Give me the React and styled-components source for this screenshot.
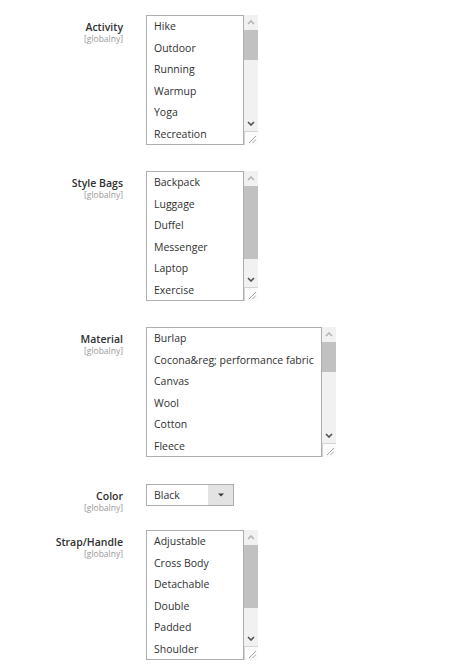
import React from "react";
import styled, { createGlobalStyle } from "styled-components";

const GlobalStyle = createGlobalStyle`
    body {
        margin: 0;
        background: #fff;
        font-family: "Open Sans", "Liberation Sans", sans-serif;
        color: #303030;
    }
`;

const fields = [
    {
        label: "Activity",
        type: "multi",
        width: 98,
        thumb: 30,
        options: ["Hike", "Outdoor", "Running", "Warmup", "Yoga", "Recreation"],
    },
    {
        label: "Style Bags",
        type: "multi",
        width: 98,
        thumb: 73,
        options: ["Backpack", "Luggage", "Duffel", "Messenger", "Laptop", "Exercise"],
    },
    {
        label: "Material",
        type: "multi",
        width: 176,
        thumb: 30,
        options: [
            "Burlap",
            "Cocona&reg; performance fabric",
            "Canvas",
            "Wool",
            "Cotton",
            "Fleece",
        ],
    },
    { label: "Color", type: "select", value: "Black", mt: 1 },
    {
        label: "Strap/Handle",
        type: "multi",
        width: 98,
        thumb: 63,
        mt: -9,
        options: ["Adjustable", "Cross Body", "Detachable", "Double", "Padded", "Shoulder"],
    },
];

const Chevron = ({ up, color }) => (
    <svg width="8" height="5" viewBox="0 0 8 5">
        <polyline
            points={up ? "1,4 4,1 7,4" : "1,1 4,4 7,1"}
            fill="none"
            stroke={color}
            strokeWidth="1.6"
        />
    </svg>
);

const MultiSelect = ({ field }) => (
    <ListWrap>
        <OptionsPanel $width={field.width}>
            {field.options.map((opt) => (
                <Option key={opt}>{opt}</Option>
            ))}
        </OptionsPanel>
        <ScrollBar>
            <ScrollButton>
                <Chevron up color="#b4b4b4" />
            </ScrollButton>
            <Track>
                <Thumb $height={field.thumb} />
            </Track>
            <ScrollButton>
                <Chevron color="#505050" />
            </ScrollButton>
            <Resizer>
                <svg width="8" height="8" viewBox="0 0 8 8">
                    <line x1="1" y1="8" x2="8" y2="1" stroke="#8a8a8a" strokeWidth="0.8" />
                    <line x1="4.5" y1="8" x2="8" y2="4.5" stroke="#8a8a8a" strokeWidth="0.8" />
                </svg>
            </Resizer>
        </ScrollBar>
    </ListWrap>
);

const Dropdown = ({ value }) => (
    <SelectBox>
        <SelectValue>{value}</SelectValue>
        <SelectArrow>
            <svg width="6" height="4" viewBox="0 0 6 4">
                <polygon points="0,0.5 6,0.5 3,3.5" fill="#41362f" />
            </svg>
        </SelectArrow>
    </SelectBox>
);

const App = () => {
    return (
        <>
            <GlobalStyle />
            <Form>
                {fields.map((field) => (
                    <Row key={field.label} $mt={field.mt || 0}>
                        <LabelCol>
                            <Label>{field.label}</Label>
                            <Scope>[globalny]</Scope>
                        </LabelCol>
                        <Control>
                            {field.type === "multi" ? (
                                <MultiSelect field={field} />
                            ) : (
                                <Dropdown value={field.value} />
                            )}
                        </Control>
                    </Row>
                ))}
            </Form>
        </>
    );
};

export default App;

const Form = styled.div`
    display: flex;
    flex-direction: column;
    gap: 26px;
    padding-top: 15px;
`;

const Row = styled.div`
    display: grid;
    grid-template-columns: 124px 1fr;
    column-gap: 22px;
    margin-top: ${(p) => p.$mt}px;
`;

const LabelCol = styled.div`
    display: flex;
    flex-direction: column;
    align-items: flex-end;
    padding-top: 5px;
    padding-right: 1px;
`;

const Label = styled.div`
    font-size: 10.5px;
    font-weight: 600;
    line-height: 14px;
    color: #303030;
`;

const Scope = styled.div`
    font-size: 8.5px;
    line-height: 10px;
    color: #999;
`;

const Control = styled.div`
    display: flex;
`;

const ListWrap = styled.div`
    display: flex;
    height: 130px;
`;

const OptionsPanel = styled.div`
    width: ${(p) => p.$width}px;
    box-sizing: border-box;
    border: 1px solid #adadad;
    overflow: hidden;
    background: #fff;
`;

const Option = styled.div`
    font-size: 10.5px;
    line-height: 15px;
    padding: 3px 8px 3.6px 7px;
    color: #303030;
    white-space: nowrap;
`;

const ScrollBar = styled.div`
    width: 14px;
    display: flex;
    flex-direction: column;
    background: #f1f1f1;
`;

const ScrollButton = styled.div`
    height: 15px;
    display: flex;
    align-items: center;
    justify-content: center;
`;

const Track = styled.div`
    flex: 1;
`;

const Thumb = styled.div`
    height: ${(p) => p.$height}px;
    background: #c1c1c1;
`;

const Resizer = styled.div`
    height: 14px;
    box-sizing: border-box;
    border-left: 1px solid #d4d4d4;
    border-top: 1px solid #d4d4d4;
    background: #fbfbfb;
    display: flex;
    align-items: flex-end;
    justify-content: flex-end;
    padding: 0 2px 2px 0;
`;

const SelectBox = styled.div`
    width: 88px;
    height: 22px;
    box-sizing: border-box;
    border: 1px solid #adadad;
    display: flex;
    background: #fff;
`;

const SelectValue = styled.div`
    flex: 1;
    font-size: 10.5px;
    line-height: 20px;
    padding-left: 7px;
    color: #303030;
`;

const SelectArrow = styled.div`
    width: 25px;
    background: #e3e3e3;
    display: flex;
    align-items: center;
    justify-content: center;
`;
